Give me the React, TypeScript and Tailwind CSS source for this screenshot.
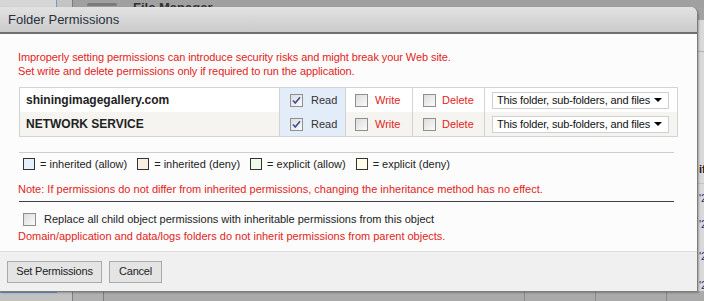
import React from "react";

const FONT = { fontFamily: '"Liberation Sans", Arial, sans-serif' };

function Box({ checked = false }: { checked?: boolean }) {
  return (
    <span className="flex h-[13px] w-[13px] shrink-0 items-center justify-center border border-[#8e8f8f] bg-gradient-to-br from-[#dcdcdc] to-[#fbfbfb]">
      {checked ? (
        <svg width="9" height="9" viewBox="0 0 9 9">
          <path d="M1 4.5 L3.3 7 L8 1.2" fill="none" stroke="#3b4f9c" strokeWidth="1.6" />
        </svg>
      ) : null}
    </span>
  );
}

function Scope() {
  return (
    <div className="flex h-[17px] w-[177px] items-center justify-between border border-[#cfcfcf] bg-white pl-[4px] pr-[6px] text-[11px] tracking-[-0.15px] whitespace-nowrap text-[#111]">
      <span>This folder, sub-folders, and files</span>
      <span className="h-0 w-0 border-x-[4px] border-t-[4px] border-x-transparent border-t-black" />
    </div>
  );
}

function PermRow({ name, shaded }: { name: string; shaded?: boolean }) {
  return (
    <div className={`flex h-[24px] items-stretch text-[11px] ${shaded ? "bg-[#f5f4f0]" : "bg-white"}`}>
      <div className="flex w-[260px] items-center border-r border-[#d3d3d3] pl-[6px] text-[12px] font-bold text-[#222]">
        {name}
      </div>
      <div className="flex w-[66px] items-center gap-[8px] border-r border-[#d3d3d3] bg-[#e3edf9] pl-[10px] text-[#333]">
        <Box checked />
        <span>Read</span>
      </div>
      <div className="flex w-[67px] items-center gap-[7px] border-r border-[#d3d3d3] pl-[9px] text-[#e3241b]">
        <Box />
        <span>Write</span>
      </div>
      <div className="flex w-[72px] items-center gap-[6px] border-r border-[#d3d3d3] pl-[10px] text-[#e3241b]">
        <Box />
        <span>Delete</span>
      </div>
      <div className="flex flex-1 items-center pl-[7px]">
        <Scope />
      </div>
    </div>
  );
}

function Legend({ color, label }: { color: string; label: string }) {
  return (
    <div className="flex items-center gap-[5px]">
      <span className={`h-[12px] w-[12px] border border-[#333] ${color}`} />
      <span>= {label}</span>
    </div>
  );
}

export default function App() {
  return (
    <div className="relative h-[301px] w-[704px] overflow-hidden bg-[#a3a3a3]" style={FONT}>
      {/* page behind the dialog */}
      <div className="flex h-[8px]">
        <div className="w-[56px] bg-[#d6d6d6]" />
        <div className="w-px bg-[#6f9ad8]" />
        <div className="w-[16px] border-r border-[#7d7d7d] bg-[#c4c4c4]" />
        <div className="flex flex-1 items-end gap-[16px] overflow-hidden bg-[#a0a0a0] pl-[14px]">
          <span className="mb-[2px] h-[3px] w-[30px] rounded-full bg-[#7b7b7b]" />
          <span className="-mb-[6px] text-[13px] font-bold leading-none text-[#333]">File Manager</span>
        </div>
      </div>
      <div className="absolute right-0 top-[20px] flex h-[281px] w-[7px] flex-col border-l border-[#8c8c8c] bg-[#d9d9d9] text-[11px] leading-none">
        <div className="h-[32px] border-b border-[#b3b3b3]" />
        <div className="mt-[112px] pl-[1px] font-bold text-[#222]">if</div>
        <div className="mt-[8px] border-t border-[#c3c3c3]" />
        <div className="mt-[9px] pl-[1px] text-[#1c2f7a]">'2</div>
        <div className="mt-[15px] pl-[1px] text-[#1c2f7a]">'2</div>
        <div className="mt-[21px] pl-[1px] text-[#1c2f7a]">'2</div>
        <div className="mt-[18px] pl-[1px] text-[#1c2f7a]">'2</div>
      </div>
      <div className="absolute bottom-0 left-0 flex h-[10px] w-full">
        <div className="w-[57px] border-t-2 border-[#6f9ad8] bg-[#c2c2c2]" />
        <div className="w-[16px] border-r border-[#7f7f7f] bg-[#c2c2c2]" />
        <div className="w-[31px] border-r border-[#7f7f7f] bg-[#b0b0b0]" />
        <div className="w-[421px] border-r border-[#8a8a8a] bg-[#aaaaaa]" />
        <div className="w-[71px] border-r border-[#8a8a8a] bg-[#aaaaaa]" />
        <div className="w-[71px] border-r border-[#8a8a8a] bg-[#aaaaaa]" />
        <div className="flex-1 bg-[#aaaaaa]" />
      </div>

      {/* dialog */}
      <div className="absolute left-0 top-[7px] flex h-[285px] w-[698px] flex-col overflow-hidden rounded-tr-[7px] border-b border-r border-[#7c7c7c] bg-[#fcfcfc] shadow-[1px_1px_2px_rgba(0,0,0,0.25)]">
        <div className="flex h-[27px] shrink-0 items-center border-b-2 border-[#6f6f6f] bg-gradient-to-b from-[#e2e2e2] to-[#cbcbcb] pl-[8px] text-[13px] text-[#27313d]">
          Folder Permissions
        </div>

        <div className="flex flex-1 flex-col pl-[18px] pr-[22px] text-[11px] leading-[14px]">
          <div className="mt-[16px] tracking-[-0.08px] text-[#e3241b]">
            <p>Improperly setting permissions can introduce security risks and might break your Web site.</p>
            <p>Set write and delete permissions only if required to run the application.</p>
          </div>

          <div className="ml-px mt-[9px] w-[659px] border border-[#d3d3d3]">
            <PermRow name="shiningimagegallery.com" />
            <PermRow name="NETWORK SERVICE" shaded />
          </div>

          <div className="ml-px mt-[15px] w-[655px] border-t border-[#cdcdcd]" />

          <div className="mt-[4px] flex h-[14px] items-center gap-[10px] pl-[5px] text-[#222]">
            <Legend color="bg-[#e4f0fc]" label="inherited (allow)" />
            <Legend color="bg-[#fdeee2]" label="inherited (deny)" />
            <Legend color="bg-[#eefbe8]" label="explicit (allow)" />
            <Legend color="bg-[#fdfde8]" label="explicit (deny)" />
          </div>

          <p className="mt-[11px] text-[#e3241b]">
            Note: If permissions do not differ from inherited permissions, changing the inheritance method has no effect.
          </p>

          <div className="ml-px mt-[5px] w-[655px] border-t border-[#3f3f3f]" />

          <div className="mt-[10px] flex h-[14px] items-center gap-[8px] pl-[5px] text-[#222]">
            <Box />
            <span>Replace all child object permissions with inheritable permissions from this object</span>
          </div>
          <p className="mt-[3px] text-[#e3241b]">
            Domain/application and data/logs folders do not inherit permissions from parent objects.
          </p>
        </div>

        <div className="flex h-[40px] shrink-0 items-center gap-[7px] border-t border-[#dedede] bg-[#f0f0f0] pl-[7px] text-[11px] tracking-[-0.2px] text-[#222]">
          <button type="button" className="h-[22px] w-[95px] border border-[#a9a9a9] bg-[#e4e4e4]">
            Set Permissions
          </button>
          <button type="button" className="h-[22px] w-[53px] border border-[#a9a9a9] bg-[#e4e4e4]">
            Cancel
          </button>
        </div>
      </div>
    </div>
  );
}
